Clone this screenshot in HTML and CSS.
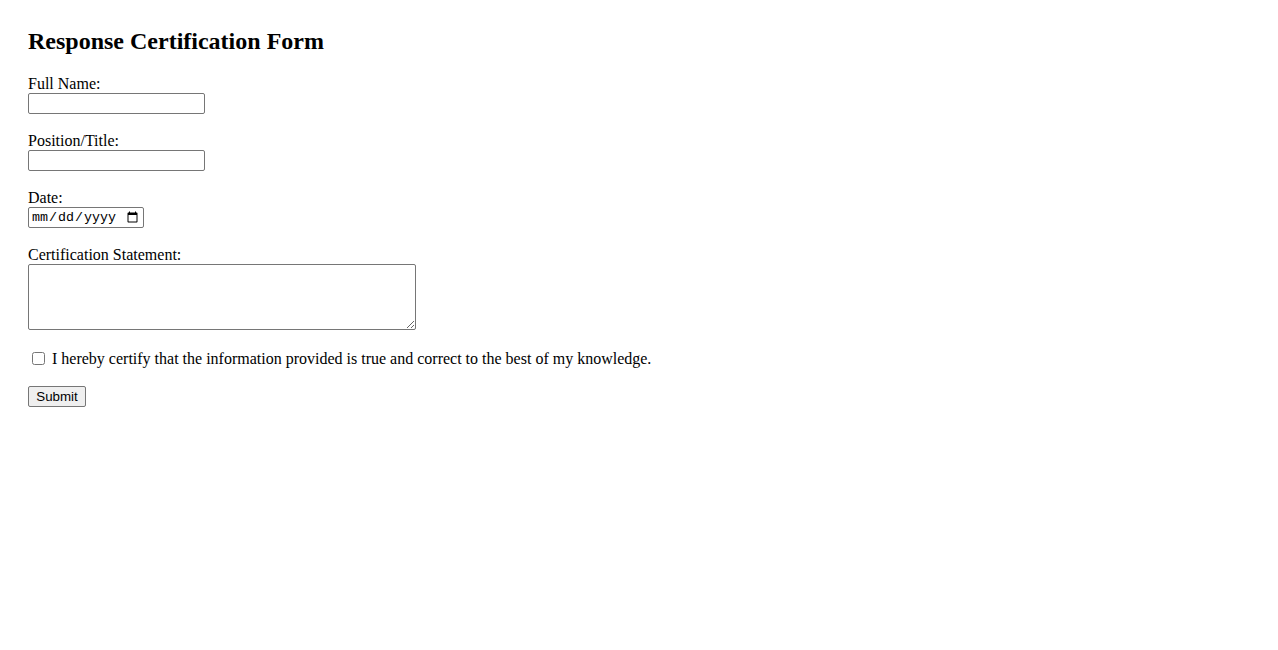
FILE: index.html
```html
<!DOCTYPE html>
<html lang="en">
<head>
    <meta charset="UTF-8">
    <meta name="viewport" content="width=device-width, initial-scale=1.0">
    <title>Response Certification Form</title>
    <link rel="stylesheet" href="styles.css">
</head>
<body>
    <h2>Response Certification Form</h2>
    <form id="certForm">
        <div class="field">
            <label for="fullName">Full Name:</label>
            <input type="text" id="fullName" name="fullName" class="text-input">
        </div>

        <div class="field">
            <label for="position">Position/Title:</label>
            <input type="text" id="position" name="position" class="text-input">
        </div>

        <div class="field">
            <label for="date">Date:</label>
            <input type="date" id="date" name="date" class="date-input">
        </div>

        <div class="field">
            <label for="statement">Certification Statement:</label>
            <textarea id="statement" name="statement" rows="4"></textarea>
        </div>

        <div class="check-row">
            <input type="checkbox" id="certify" name="certify">
            <label for="certify">I hereby certify that the information provided is true and correct to the best of my knowledge.</label>
        </div>

        <button type="submit">Submit</button>
    </form>
</body>
</html>
```

FILE: styles.css
```css
body {
    margin: 0;
    padding: 28px;
    font-family: 'Liberation Serif', 'Times New Roman', serif;
    font-size: 16px;
    color: #000;
    background: #fff;
}
h2 {
    font-size: 24px;
    margin: 0 0 20px;
    line-height: 27px;
}
.field {
    margin-bottom: 18px;
}
.field label {
    display: block;
    line-height: 18px;
}
.text-input,
.date-input,
textarea {
    display: block;
    margin: 0;
    box-sizing: border-box;
    border: 1px solid #767676;
    border-radius: 2px;
    background: #fff;
}
.text-input {
    width: 177px;
    height: 21px;
    padding: 1px 2px;
}
.date-input {
    width: 116px;
    height: 21px;
    padding: 0 2px;
    font-family: 'Liberation Mono', 'Courier New', monospace;
    font-size: 13.33px;
}
textarea {
    width: 388px;
    height: 66px;
    padding: 2px;
    font-family: 'Liberation Mono', monospace;
    font-size: 13.33px;
}
.check-row {
    display: flex;
    align-items: center;
    margin: 20px 0 18px;
    line-height: 18px;
}
.check-row input {
    width: 13px;
    height: 13px;
    margin: 0 7px 2px 4px;
}
button {
    font-family: 'Liberation Sans', Arial, sans-serif;
    font-size: 13.33px;
    width: 58px;
    height: 21px;
    padding: 1px 6px;
    border: 1px solid #767676;
    border-radius: 2px;
    background: #efefef;
    color: #000;
}
```
